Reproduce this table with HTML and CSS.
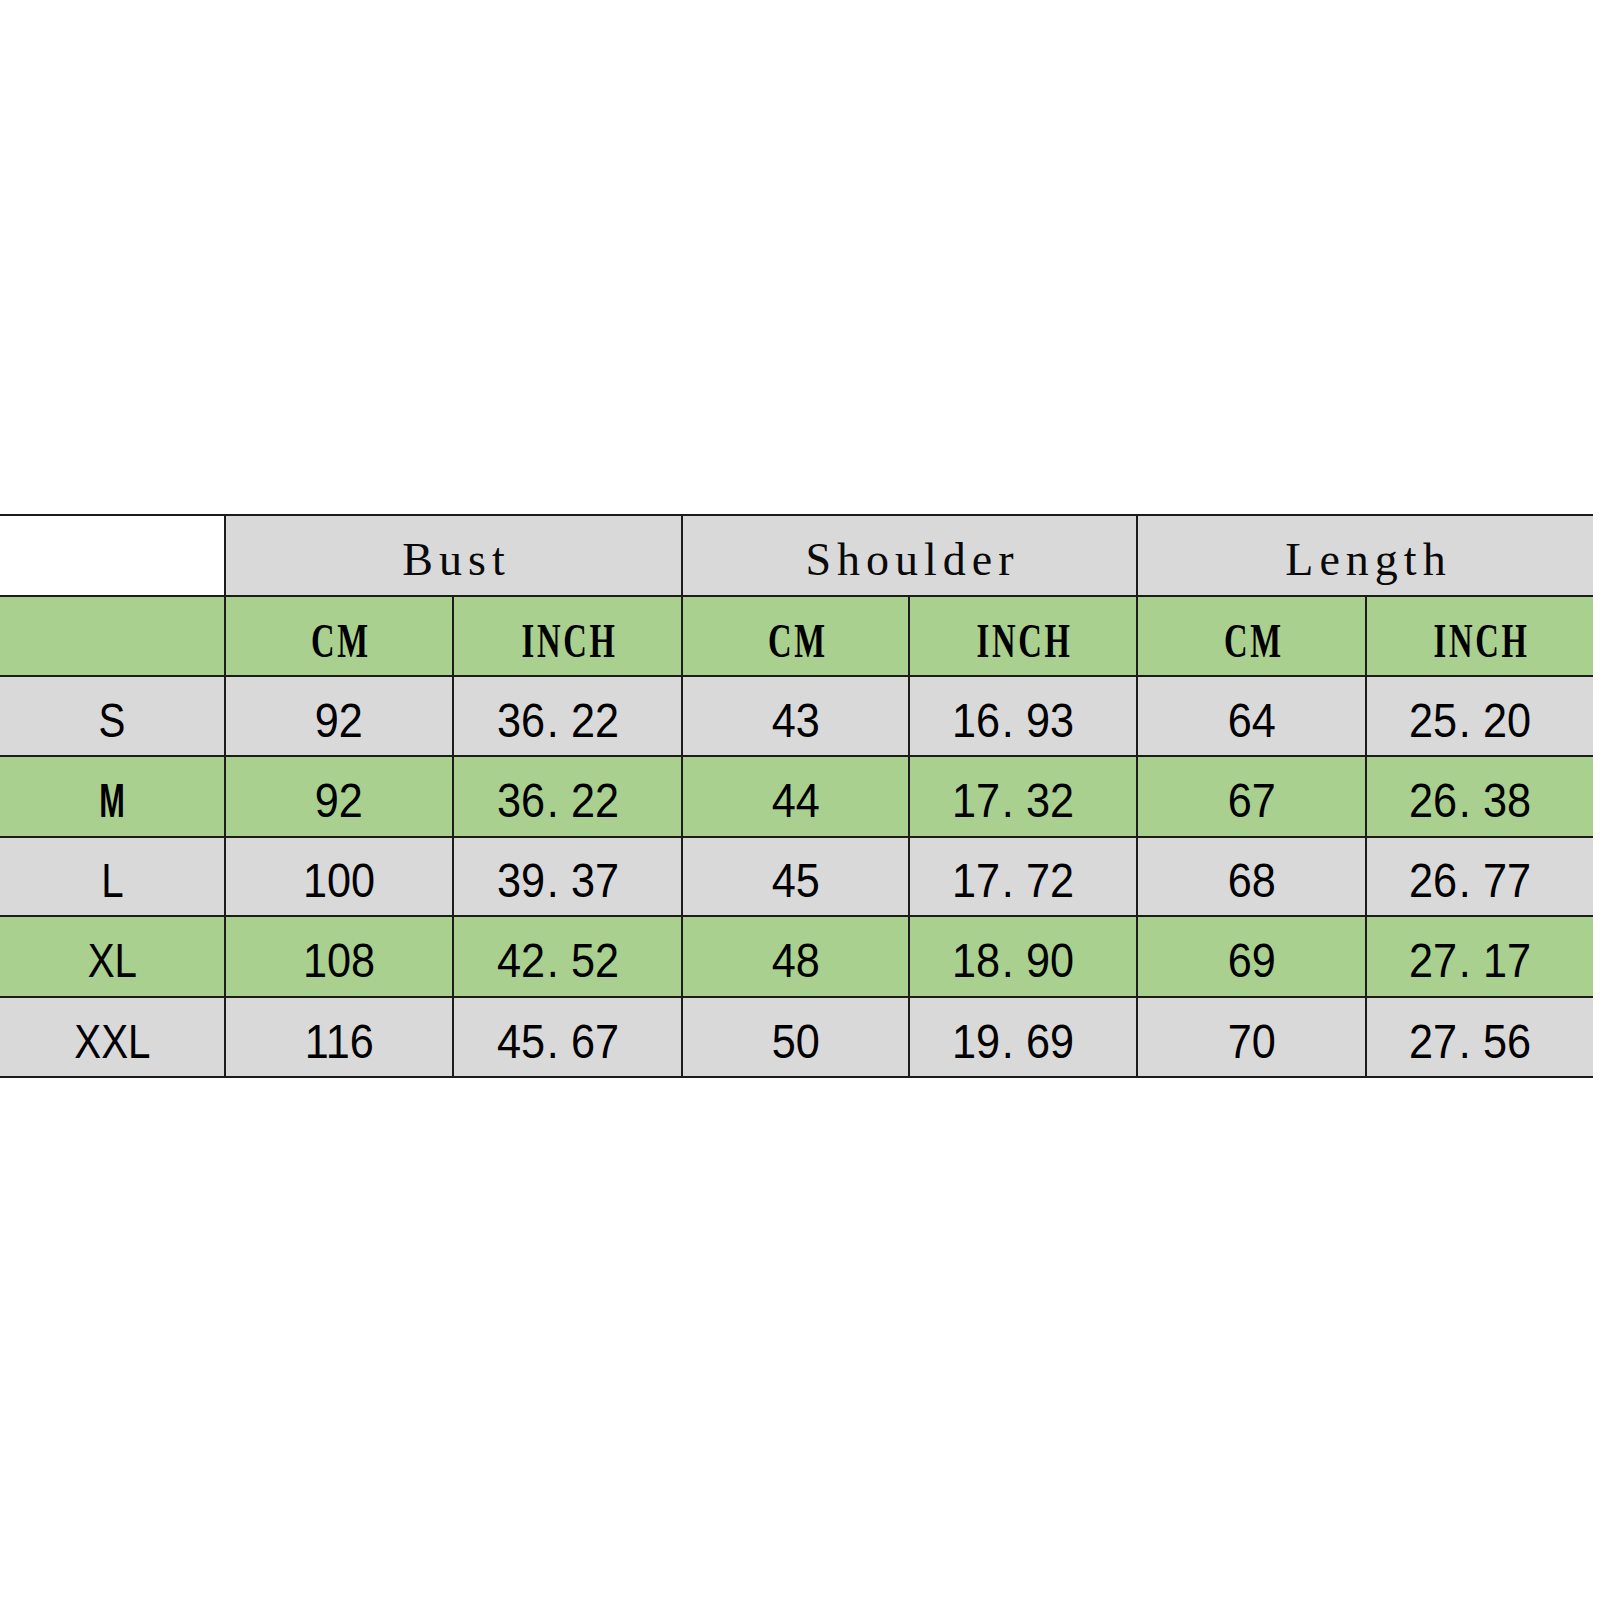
FILE: index.html
```html
<!DOCTYPE html>
<html>
<head>
<meta charset="utf-8">
<title>Size chart</title>
<link rel="stylesheet" href="styles.css">
</head>
<body>
<div class="chart">
  <div class="cell w"></div>
  <div class="cell g span2"><span class="grp">Bust</span></div>
  <div class="cell g span2"><span class="grp">Shoulder</span></div>
  <div class="cell g span2"><span class="grp">Length</span></div>

  <div class="cell n"></div>
  <div class="cell n"><span class="unit">CM</span></div>
  <div class="cell n"><span class="unit">INCH</span></div>
  <div class="cell n"><span class="unit">CM</span></div>
  <div class="cell n"><span class="unit">INCH</span></div>
  <div class="cell n"><span class="unit">CM</span></div>
  <div class="cell n"><span class="unit">INCH</span></div>

  <div class="cell g"><span class="size">S</span></div>
  <div class="cell g"><span class="num">92</span></div>
  <div class="cell g"><span class="num dec">36<span class="dot">.</span>22</span></div>
  <div class="cell g"><span class="num">43</span></div>
  <div class="cell g"><span class="num dec">16<span class="dot">.</span>93</span></div>
  <div class="cell g"><span class="num">64</span></div>
  <div class="cell g"><span class="num dec">25<span class="dot">.</span>20</span></div>

  <div class="cell n"><span class="size m">M</span></div>
  <div class="cell n"><span class="num">92</span></div>
  <div class="cell n"><span class="num dec">36<span class="dot">.</span>22</span></div>
  <div class="cell n"><span class="num">44</span></div>
  <div class="cell n"><span class="num dec">17<span class="dot">.</span>32</span></div>
  <div class="cell n"><span class="num">67</span></div>
  <div class="cell n"><span class="num dec">26<span class="dot">.</span>38</span></div>

  <div class="cell g"><span class="size">L</span></div>
  <div class="cell g"><span class="num">100</span></div>
  <div class="cell g"><span class="num dec">39<span class="dot">.</span>37</span></div>
  <div class="cell g"><span class="num">45</span></div>
  <div class="cell g"><span class="num dec">17<span class="dot">.</span>72</span></div>
  <div class="cell g"><span class="num">68</span></div>
  <div class="cell g"><span class="num dec">26<span class="dot">.</span>77</span></div>

  <div class="cell n"><span class="size">XL</span></div>
  <div class="cell n"><span class="num">108</span></div>
  <div class="cell n"><span class="num dec">42<span class="dot">.</span>52</span></div>
  <div class="cell n"><span class="num">48</span></div>
  <div class="cell n"><span class="num dec">18<span class="dot">.</span>90</span></div>
  <div class="cell n"><span class="num">69</span></div>
  <div class="cell n"><span class="num dec">27<span class="dot">.</span>17</span></div>

  <div class="cell g"><span class="size">XXL</span></div>
  <div class="cell g"><span class="num">116</span></div>
  <div class="cell g"><span class="num dec">45<span class="dot">.</span>67</span></div>
  <div class="cell g"><span class="num">50</span></div>
  <div class="cell g"><span class="num dec">19<span class="dot">.</span>69</span></div>
  <div class="cell g"><span class="num">70</span></div>
  <div class="cell g"><span class="num dec">27<span class="dot">.</span>56</span></div>
</div>
</body>
</html>
```
FILE: styles.css
```css
html, body {
  margin: 0;
  padding: 0;
  background: #ffffff;
}

body {
  width: 1600px;
  height: 1600px;
  padding-top: 514px;
  box-sizing: border-box;
}

.chart {
  width: 1593px;
  display: grid;
  grid-template-columns: 224px 226px 227px 225px 226px 227px 226px;
  grid-template-rows: 79px 78px 78px 79px 77px 79px 78px;
  gap: 2px;
  padding: 2px 0;
  background: #1c1c1c;
}

.cell {
  display: flex;
  align-items: center;
  justify-content: center;
  box-sizing: border-box;
  color: #000;
  overflow: hidden;
}

.w { background: #ffffff; }
.g { background: #d9d9d9; }
.n { background: #a9d08e; }

.span2 { grid-column: span 2; }

.grp {
  font-family: "Liberation Serif", "Times New Roman", serif;
  font-size: 46px;
  line-height: 1;
  letter-spacing: 6px;
  margin-right: -6px;
  padding-top: 8px;
  color: #0a0a0a;
}

.unit {
  display: inline-block;
  font-family: "Liberation Serif", "Times New Roman", serif;
  font-weight: bold;
  font-size: 48px;
  line-height: 1;
  letter-spacing: 4px;
  margin-right: -4px;
  padding-top: 10px;
  transform: scaleX(0.68);
}

.num,
.size {
  display: inline-block;
  font-family: "Liberation Sans", Arial, sans-serif;
  font-size: 48px;
  line-height: 1;
  padding-top: 9px;
  transform: scaleX(0.9);
  white-space: nowrap;
}

.size {
  transform: scaleX(0.84);
}

.size.m {
  font-weight: bold;
  transform: scaleX(0.64);
}

.dec {
  padding-right: 22px;
}

.dot {
  display: inline-block;
  width: 29px;
  padding-left: 2px;
  box-sizing: border-box;
  text-align: left;
}
```
